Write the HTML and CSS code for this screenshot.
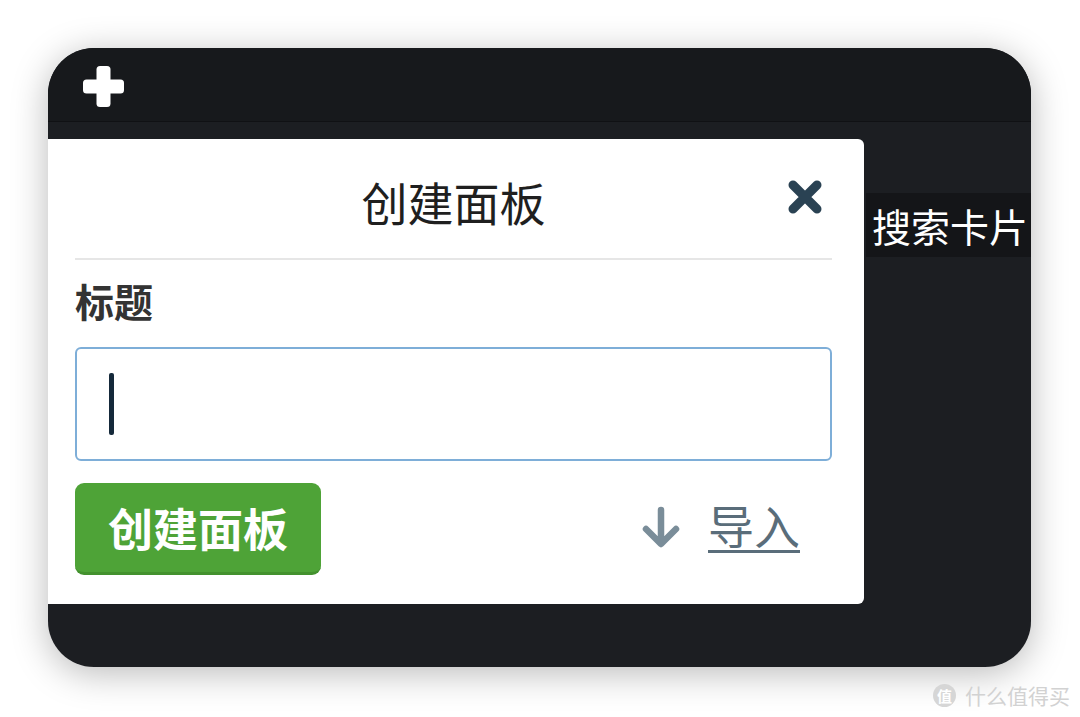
FILE: index.html
```html
<!DOCTYPE html>
<html lang="zh">
<head>
<meta charset="utf-8">
<title>创建面板</title>
<link rel="stylesheet" href="styles.css">
</head>
<body>
<div class="page">
  <div class="window">
    <header class="topbar">
      <svg class="plus" width="41" height="41" viewBox="0 0 41 41" aria-hidden="true">
        <rect x="13.5" y="0" width="14" height="41" rx="3.5" fill="#fff"/>
        <rect x="0" y="13.5" width="41" height="14" rx="3.5" fill="#fff"/>
      </svg>
    </header>
    <div class="main">
      <section class="modal">
        <div class="modal-head">
          <span></span>
          <h1 class="modal-title">创建面板</h1>
          <svg class="close" width="36" height="36" viewBox="0 0 36 36" aria-hidden="true">
            <path d="M6 6 L30 30 M30 6 L6 30" stroke="#2a4253" stroke-width="9" stroke-linecap="round" fill="none"/>
          </svg>
        </div>
        <label class="field-label">标题</label>
        <div class="input"><span class="caret"></span></div>
        <div class="actions">
          <button class="btn-create">创建面板</button>
          <a class="import">
            <svg class="arrow" width="40" height="42" viewBox="0 0 40 42" aria-hidden="true">
              <path d="M20 4 V37 M5 23 L20 38 L35 23" stroke="#7a8d99" stroke-width="6.5" stroke-linecap="round" stroke-linejoin="round" fill="none"/>
            </svg>
            <span class="import-text">导入</span>
          </a>
        </div>
      </section>
      <div class="search">搜索卡片</div>
    </div>
  </div>
  <div class="watermark">
    <span class="wm-logo">值</span>
    <span class="wm-text">什么值得买</span>
  </div>
</div>
</body>
</html>
```
FILE: styles.css
```css
* { box-sizing: border-box; }
html, body { margin: 0; padding: 0; }
body {
  background: #ffffff;
  font-family: "Noto Sans CJK SC", "Noto Sans", sans-serif;
  width: 1080px;
  height: 717px;
  overflow: hidden;
}
.page {
  padding-top: 48px;
  padding-left: 48px;
}
.window {
  width: 983px;
  height: 619px;
  border-radius: 46px;
  overflow: hidden;
  background: #1c1e22;
  box-shadow: 0 6px 36px rgba(0,0,0,0.28);
  display: flex;
  flex-direction: column;
}
.topbar {
  height: 74px;
  background: #17191c;
  border-bottom: 1px solid #101114;
  display: flex;
  align-items: center;
  padding-left: 83px;
  padding-left: 35px;
  padding-top: 4px;
  flex: none;
}
.plus { display: block; }
.main {
  display: flex;
  align-items: flex-start;
  padding-top: 17px;
}
.modal {
  width: 816px;
  height: 465px;
  background: #ffffff;
  border-radius: 0 6px 6px 0;
  padding: 0 32px 0 27px;
  display: flex;
  flex-direction: column;
  flex: none;
}
.modal-head {
  height: 121px;
  display: grid;
  grid-template-columns: 1fr auto 1fr;
  align-items: center;
  border-bottom: 2px solid #e6e6e6;
  padding-top: 6px;
}
.modal-title {
  margin: 0;
  font-size: 46px;
  font-weight: 400;
  color: #1f1f1f;
  line-height: 1.2;
}
.close {
  justify-self: end;
  margin-right: 9px;
  margin-top: -10px;
}
.field-label {
  display: block;
  margin-top: 16px;
  font-size: 39px;
  font-weight: 700;
  line-height: 48px;
  color: #333333;
}
.input {
  margin-top: 23px;
  height: 114px;
  border: 2px solid #7eaed8;
  border-radius: 6px;
  display: flex;
  align-items: center;
  padding-left: 32px;
}
.caret {
  width: 5px;
  height: 62px;
  border-radius: 2px;
  background: #15293a;
}
.actions {
  margin-top: 22px;
  display: flex;
  align-items: center;
  justify-content: space-between;
  padding-right: 32px;
}
.btn-create {
  width: 246px;
  height: 92px;
  background: #4ea337;
  border: none;
  border-bottom: 3px solid #43912e;
  border-radius: 9px;
  color: #ffffff;
  font-family: "Noto Sans CJK SC", sans-serif;
  font-size: 45px;
  font-weight: 700;
  padding: 0;
  line-height: 1;
}
.import {
  display: flex;
  align-items: center;
  gap: 27px;
  margin-top: -8px;
}
.arrow { display: block; margin-top: 4px; }
.import-text {
  font-size: 46px;
  line-height: 1.2;
  color: #5a6d7a;
  text-decoration: underline;
  text-decoration-thickness: 3px;
  text-underline-offset: 6px;
}
.search {
  margin-top: 54px;
  margin-left: 2px;
  height: 64px;
  flex: 1;
  background: #141518;
  color: #ffffff;
  font-size: 39px;
  line-height: 64px;
  padding-left: 6px;
  white-space: nowrap;
}
.watermark {
  display: flex;
  justify-content: flex-end;
  align-items: center;
  gap: 9px;
  margin-top: 16px;
  padding-right: 10px;
  color: #cfcfcf;
}
.wm-logo {
  width: 23px;
  height: 23px;
  border-radius: 50%;
  background: #d6d6d6;
  color: #ffffff;
  font-size: 15px;
  line-height: 23px;
  text-align: center;
  font-weight: 700;
}
.wm-text {
  font-size: 21px;
  line-height: 24px;
  color: #d2d2d2;
}
```
